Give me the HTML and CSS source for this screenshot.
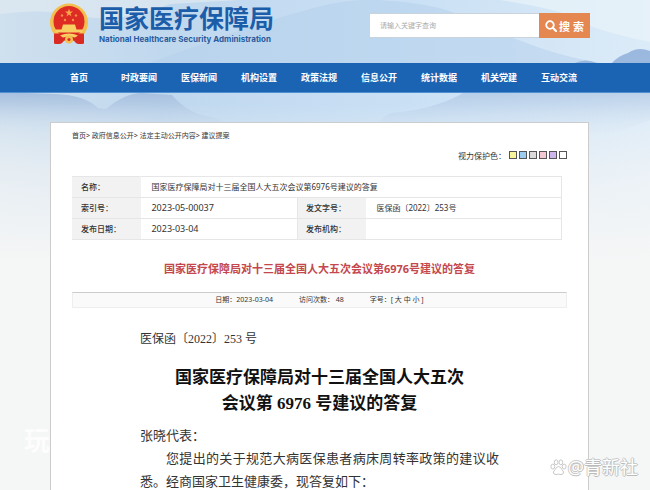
FILE: index.html
```
<!DOCTYPE html>
<html lang="zh-CN">
<head>
  <meta charset="UTF-8" />
  <meta name="viewport" content="width=device-width, initial-scale=1" />
  <title>国家医疗保障局</title>
  <link rel="stylesheet" href="styles.css">
</head>
<body>
  <svg class="scenery" viewBox="0 0 650 260" preserveAspectRatio="none" aria-hidden="true">
    <defs>
      <linearGradient id="sky" x1="0" y1="0" x2="1" y2="0">
        <stop offset="0" stop-color="#cfe0ee" />
        <stop offset="0.25" stop-color="#c0d8ee" />
        <stop offset="0.6" stop-color="#c8dff4" />
        <stop offset="1" stop-color="#dcebf8" />
      </linearGradient>
      <linearGradient id="hill" x1="0" y1="92" x2="0" y2="135" gradientUnits="userSpaceOnUse">
        <stop offset="0" stop-color="#a6bfdf" />
        <stop offset="1" stop-color="#c3d6ea" stop-opacity="0" />
      </linearGradient>
      <linearGradient id="mist" x1="0" y1="0" x2="0" y2="1">
        <stop offset="0.4" stop-color="#f5f6f6" stop-opacity="0" />
        <stop offset="0.65" stop-color="#f5f6f6" stop-opacity="0.6" />
        <stop offset="1" stop-color="#f5f6f6" />
      </linearGradient>
    </defs>
    <rect width="650" height="260" fill="url(#sky)" />
    <path d="M0 14 Q40 8 80 16 T170 4 L240 0 L0 0Z" fill="#dfe9f1" opacity="0.7" />
    <path d="M150 63 Q260 22 300 12 Q350 -4 390 1 Q430 4 452 12 Q500 34 540 48 Q570 58 600 63Z" fill="#b3cfec" opacity="0.5" />
    <path d="M500 0 L650 0 L650 42 Q590 30 560 12 Q530 4 500 0Z" fill="#e9f3fa" opacity="0.7" />
    <path d="M575 63 Q585 58 597 63 L612 63 Q618 56 628 53 Q638 46 650 51 L650 66 L575 66Z" fill="#9bb9df" />
    <path d="M0 92 L55 94 Q85 95 98 108 L106 109 Q125 93 142 93 L172 95 Q188 114 212 117 L245 130 L245 150 L0 150Z" fill="url(#hill)" />
    <path d="M378 124 Q386 111 400 112 Q438 108 465 92 L650 92 L650 120 L590 142 L378 146Z" fill="url(#hill)" opacity="0.6" />
    <rect width="650" height="260" fill="url(#mist)" />
  </svg>

  <header class="header">
    <a class="logo" href="#">
      <svg class="emblem" viewBox="0 0 40 42" aria-hidden="true">
        <path d="M5 29 L5 41 Q12 43 15 38 L25 38 Q28 43 35 41 L35 29Z" fill="#d92b24" />
        <circle cx="20" cy="20" r="19" fill="#f3bf4e" />
        <circle cx="20" cy="19" r="15.500" fill="#de2b23" />
        <path d="M20 6 l1 3 3 0 -2.500 2 1 3 -2.500 -2 -2.500 2 1 -3 -2.500 -2 3 0Z" fill="#f6a94a" />
        <g fill="#f0904a">
          <circle cx="13" cy="13" r="1.200" /><circle cx="27" cy="13" r="1.200" />
          <circle cx="16" cy="17.500" r="1.200" /><circle cx="24" cy="17.500" r="1.200" />
        </g>
        <path d="M14 22 h12 l1.500 5 h6 v3 h-27 v-3 h6Z" fill="#f7cf62" />
        <path d="M5 31 h30 L34 41 Q28 43 25 38 L15 38 Q12 43 6 41Z" fill="#d92b24" />
        <path d="M11 33 Q20 29 29 33 L26 35 Q20 33 14 35Z" fill="#f7cf62" />
        <circle cx="20" cy="37" r="4" fill="#f3bf4e" />
        <circle cx="20" cy="37" r="1.500" fill="#d92b24" />
      </svg>
      <span class="logo-text">
        <span class="logo-cn">国家医疗保障局</span>
        <span class="logo-en">National Healthcare Security Administration</span>
      </span>
    </a>
    <form class="search">
      <input type="text" placeholder="请输入关键字查询" aria-label="请输入关键字查询" />
      <button type="submit">
        <svg viewBox="0 0 12 12" aria-hidden="true">
          <circle cx="5" cy="5" r="3.800" fill="none" stroke="#fff" stroke-width="1.800" />
          <path d="M8 8 L11 11" stroke="#fff" stroke-width="2.200" stroke-linecap="round" />
        </svg>
        搜 索
      </button>
    </form>
  </header>

  <nav class="nav">
    <a href="#">首页</a>
    <a href="#">时政要闻</a>
    <a href="#">医保新闻</a>
    <a href="#">机构设置</a>
    <a href="#">政策法规</a>
    <a href="#">信息公开</a>
    <a href="#">统计数据</a>
    <a href="#">机关党建</a>
    <a href="#">互动交流</a>
  </nav>

  <div class="side-mark" aria-hidden="true">玩</div>

  <main class="main">
    <div class="crumbs">
      <a href="#">首页</a>&gt; <a href="#">政府信息公开</a>&gt; <a href="#">法定主动公开内容</a>&gt; <a href="#">建议提案</a>
    </div>

    <div class="eye-care">
      <span>视力保护色：</span>
      <button class="yellow" type="button" aria-label="黄色"></button>
      <button class="blue" type="button" aria-label="蓝色"></button>
      <button class="gray" type="button" aria-label="灰色"></button>
      <button class="pink" type="button" aria-label="粉色"></button>
      <button class="purple" type="button" aria-label="紫色"></button>
      <button class="white" type="button" aria-label="白色"></button>
    </div>

    <table class="info">
      <colgroup>
        <col class="col-label" />
        <col class="col-date" />
        <col class="col-label" />
        <col />
      </colgroup>
      <tr>
        <th>名称：</th>
        <td colspan="3">国家医疗保障局对十三届全国人大五次会议第6976号建议的答复</td>
      </tr>
      <tr>
        <th>索引号：</th>
        <td class="date">2023-05-00037</td>
        <th>发文字号：</th>
        <td>医保函〔2022〕253号</td>
      </tr>
      <tr>
        <th>发布日期：</th>
        <td class="date">2023-03-04</td>
        <th>发布机构：</th>
        <td></td>
      </tr>
    </table>

    <h1 class="title">国家医疗保障局对十三届全国人大五次会议第6976号建议的答复</h1>

    <div class="meta">
      <span>日期：2023-03-04</span>
      <span>访问次数： 48</span>
      <span>字号：[ <a href="#">大</a> <a href="#">中</a> <a href="#">小</a> ]</span>
    </div>

    <article class="article">
      <p class="doc-no">医保函〔2022〕253 号</p>
      <h2>国家医疗保障局对十三届全国人大五次<br />会议第 6976 号建议的答复</h2>
      <p>张晓代表：</p>
      <p class="indent">您提出的关于规范大病医保患者病床周转率政策的建议收悉。经商国家卫生健康委，现答复如下：</p>
    </article>
  </main>

  <div class="watermark">
    <svg viewBox="0 0 18 18" aria-hidden="true">
      <g fill="#fff" stroke="#c4c4c4" stroke-width="1">
        <ellipse cx="3" cy="8" rx="2" ry="2.600" />
        <ellipse cx="6.500" cy="3.500" rx="2" ry="2.600" />
        <ellipse cx="11.500" cy="3.500" rx="2" ry="2.600" />
        <ellipse cx="15" cy="8" rx="2" ry="2.600" />
        <path d="M9 8 Q11 8 12.500 11 Q16 14 13.500 16 Q12 17 9 16 Q6 17 4.500 16 Q2 14 5.500 11 Q7 8 9 8Z" />
      </g>
    </svg>
    <span>@青新社</span>
  </div>
</body>
</html>
```
FILE: styles.css
```
* {
  box-sizing: border-box;
}
body {
  margin: 0;
  min-height: 100vh;
  display: flex;
  flex-direction: column;
  position: relative;
  overflow-x: hidden;
  background: #f5f6f6;
  color: #333;
  font-family: 'Noto Sans', 'Noto Sans CJK SC', sans-serif;
  font-size: 8px;
}
a {
  color: inherit;
  text-decoration: none;
}
.scenery {
  position: absolute;
  top: 0;
  left: 0;
  width: 100%;
  height: 260px;
  z-index: -1;
}

/* header */
.header {
  display: flex;
  justify-content: space-between;
  align-items: flex-start;
  height: 63px;
  padding: 2px 60px 0 49px;
}
.logo {
  display: flex;
  gap: 10px;
}
.emblem {
  width: 40px;
  height: 43px;
}
.logo-text {
  display: flex;
  flex-direction: column;
  gap: 2px;
}
.logo-cn {
  font-family: 'Noto Sans CJK SC', sans-serif;
  font-size: 25px;
  font-weight: bold;
  line-height: 30px;
  color: #1b5da8;
}
.logo-en {
  font-family: Inter, 'Liberation Sans', sans-serif;
  font-size: 8px;
  font-weight: bold;
  line-height: 10px;
  color: #2a5b9c;
}
.search {
  display: flex;
  width: 221px;
  height: 25px;
  margin-top: 11px;
}
.search input {
  flex: 1;
  min-width: 0;
  padding: 0 10px;
  border: 1px solid #c9d3dc;
  border-right: none;
  border-radius: 0;
  background: #fff;
  font-family: inherit;
  font-size: 7px;
}
.search input::placeholder {
  color: #aaa;
}
.search button {
  display: flex;
  align-items: center;
  justify-content: center;
  gap: 2px;
  width: 51px;
  padding: 0;
  border: none;
  background: #e48750;
  color: #fff;
  font-family: inherit;
  font-size: 11px;
  font-weight: bold;
  cursor: pointer;
}
.search svg {
  width: 12px;
  height: 12px;
}

/* nav */
.nav {
  display: flex;
  height: 30px;
  padding: 0 61px 0 49px;
  background: #1b64b4;
  border-bottom: 1px solid #4f8fd0;
}
.nav a {
  flex: 1;
  text-align: center;
  line-height: 30px;
  font-size: 9px;
  font-weight: bold;
  color: #fff;
}

/* content card */
.main {
  flex: 1;
  margin: 29px 61px 0 50px;
  padding: 8px 21px 0;
  background: #fff;
  border: 1px solid #ccc;
  border-bottom: none;
}
.crumbs {
  font-size: 7px;
  line-height: 10px;
}
.eye-care {
  display: flex;
  justify-content: flex-end;
  align-items: center;
  gap: 2px;
  height: 12px;
  margin-top: 8px;
}
.eye-care span {
  margin-right: 1px;
}
.eye-care button {
  width: 8px;
  height: 8px;
  padding: 0;
  border: 1px solid #555;
  cursor: pointer;
}
.yellow {
  background: #f8f59b;
}
.blue {
  background: #9ccbf0;
}
.gray {
  background: #dadada;
}
.pink {
  background: #f3c8d3;
}
.purple {
  background: #cdb6ec;
}
.white {
  background: #fff;
}
.info {
  width: 99%;
  margin-top: 15px;
  border-collapse: collapse;
  table-layout: fixed;
  line-height: 12px;
}
.col-label {
  width: 14%;
}
.col-date {
  width: 32%;
}
.info th,
.info td {
  height: 21px;
  padding: 0 8px;
  border: 1px solid #e6e6e6;
  text-align: left;
}
.info th {
  background: #f2f2f2;
  border-left-color: #f2f2f2;
  border-right-color: #f2f2f2;
  font-weight: 500;
}
.info td {
  padding-left: 10px;
}
.info .date {
  font-size: 9px;
}
.title {
  margin: 20px 0 14px;
  text-align: center;
  font-size: 11px;
  line-height: 18px;
  font-weight: bold;
  color: #c4474e;
}
.meta {
  display: flex;
  justify-content: center;
  gap: 26px;
  border: 1px solid #eee;
  border-top-color: #ccc;
  background: #fafafa;
  font-size: 7px;
  line-height: 14px;
}
.article {
  padding: 20px 68px 0;
  font-family: 'Liberation Serif', 'Noto Sans CJK SC', serif;
  font-size: 13px;
  line-height: 23px;
  color: #333;
}
.article p {
  margin: 0;
  text-align: justify;
}
.article .doc-no {
  font-size: 12px;
}
.article h2 {
  margin: 14px 0 7px;
  text-align: center;
  font-size: 17px;
  line-height: 26px;
  font-weight: bold;
  color: #111;
}
.article .indent {
  text-indent: 26px;
}

/* marks over the page */
.side-mark {
  position: absolute;
  left: 24px;
  top: 422px;
  z-index: -1;
  font-size: 26px;
  line-height: 36px;
  font-weight: bold;
  color: #fdfdfd;
}
.watermark {
  position: absolute;
  right: 12px;
  top: 456px;
  display: flex;
  align-items: center;
  gap: 1px;
  font-size: 18px;
  line-height: 22px;
  color: #fff;
  text-shadow: 1px 0 #bbb, -1px 0 #ccc, 0 1px #bbb, 0 -1px #ccc;
}
.watermark svg {
  width: 17px;
  height: 17px;
}
```
